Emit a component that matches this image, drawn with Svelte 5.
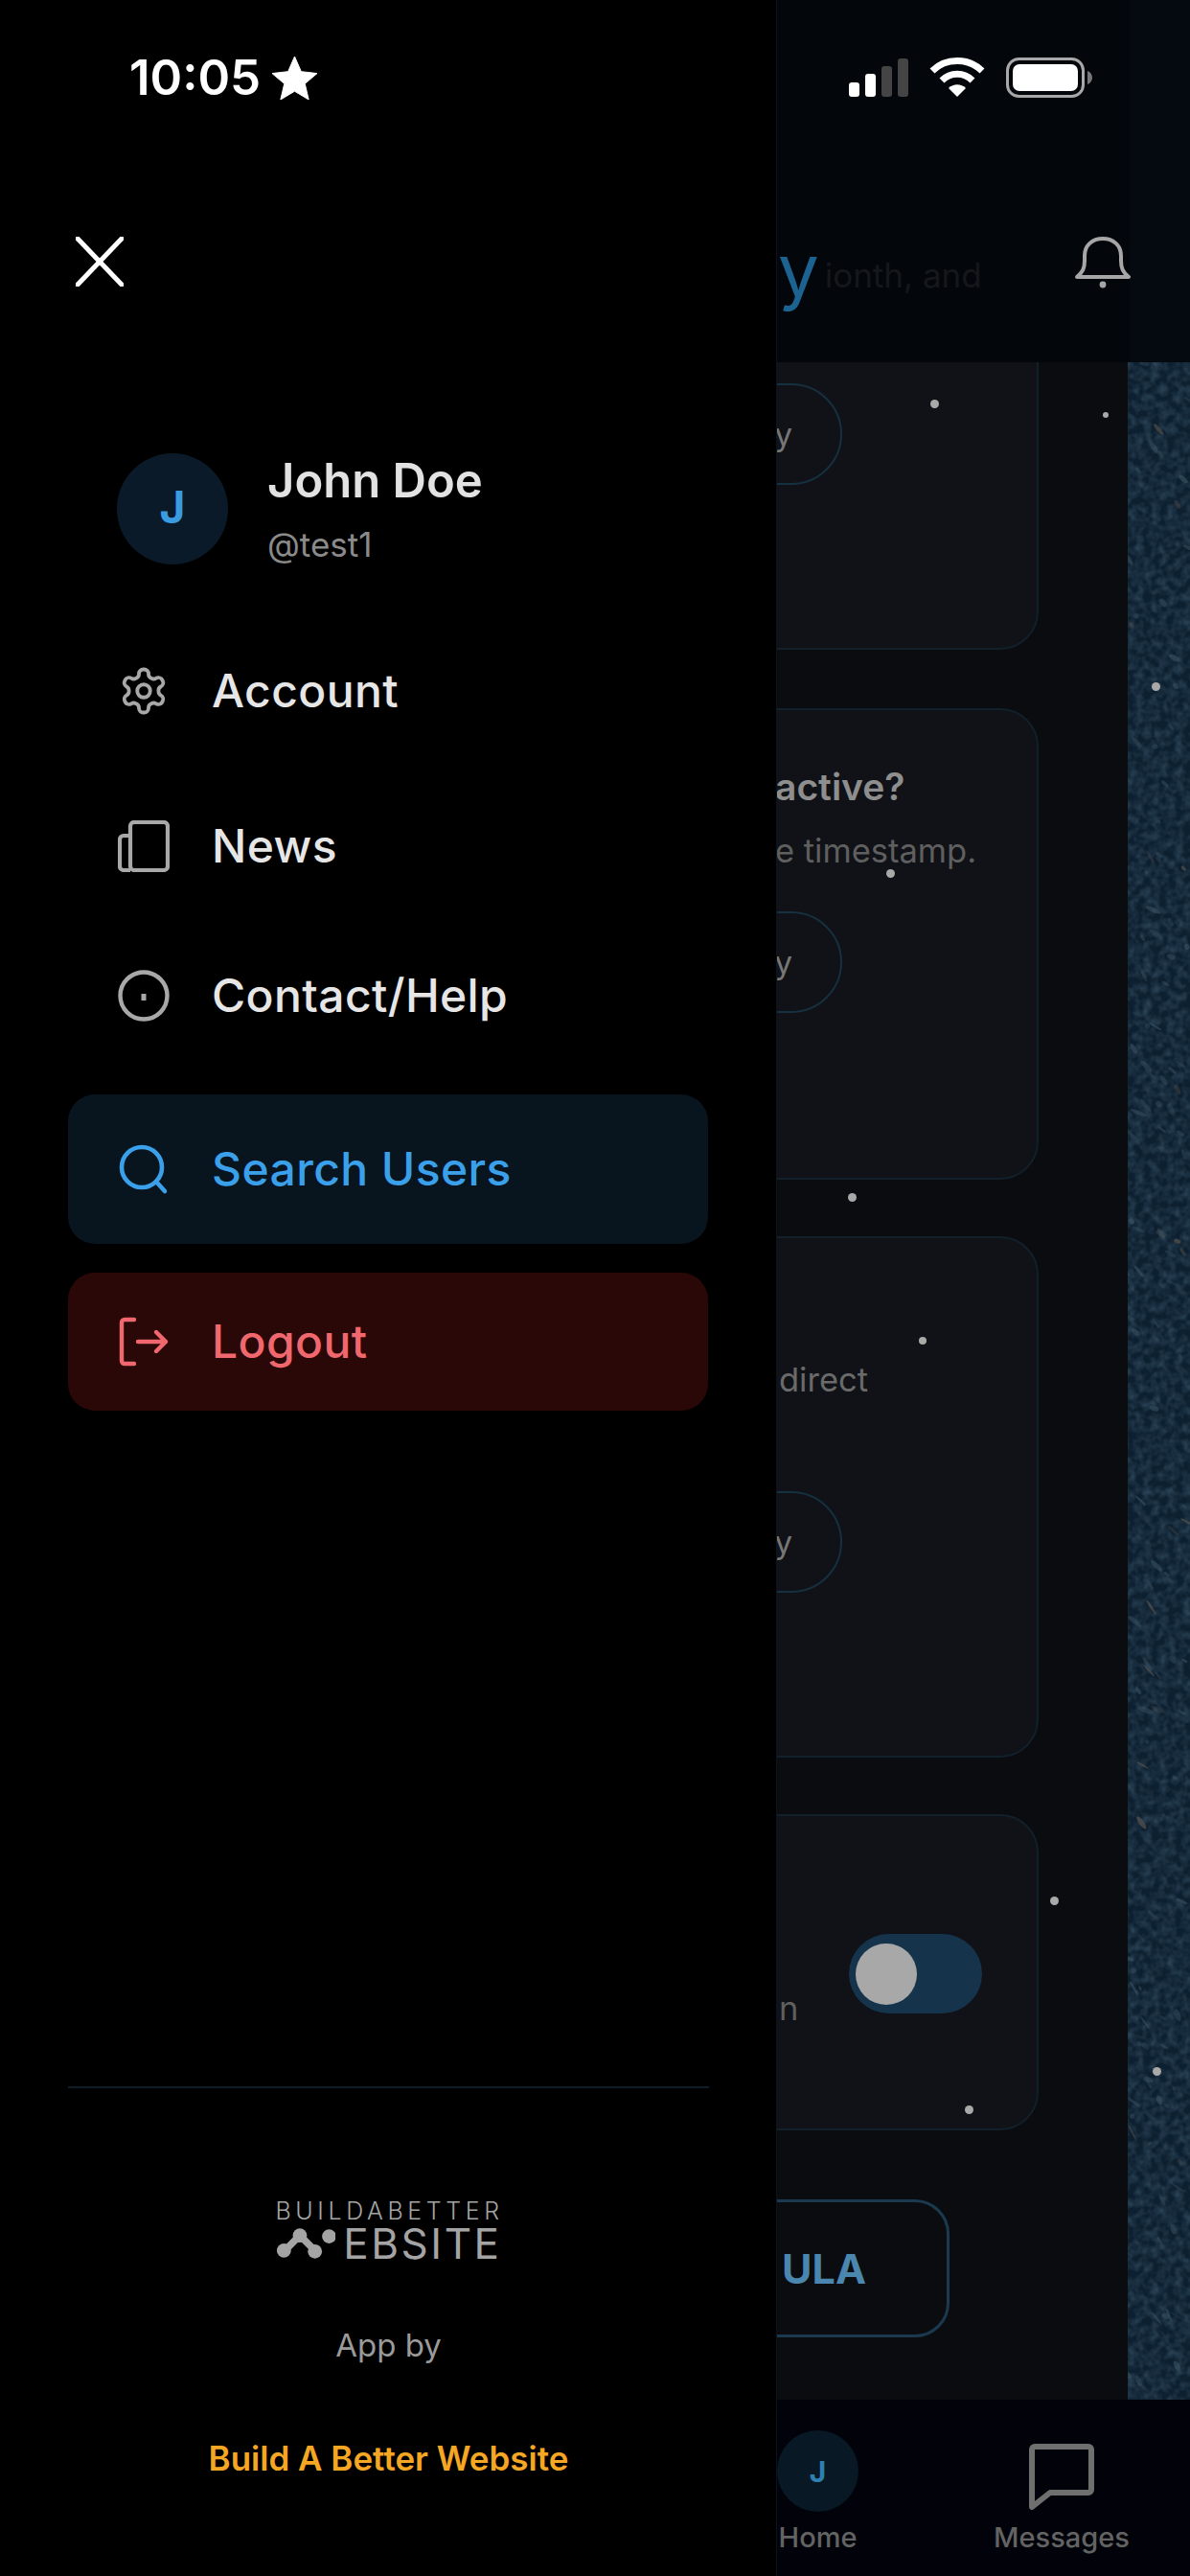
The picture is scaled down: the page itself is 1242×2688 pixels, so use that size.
<script>
  const menu = [
    { label: 'Account', icon: 'gear', cls: '' },
    { label: 'News', icon: 'news', cls: 'news' },
    { label: 'Contact/Help', icon: 'info', cls: 'contact' },
    { label: 'Search Users', icon: 'search', cls: 'search' },
    { label: 'Logout', icon: 'logout', cls: 'logout' }
  ];

  // little white dots that float over the page, coordinates are page pixels
  const stars = [
    [975, 421, 9], [1154, 433, 6], [1206, 716, 9], [929, 911, 9], [889, 1249, 9],
    [963, 1399, 8], [1100, 1983, 9], [1207, 2161, 9], [1011, 2201, 9]
  ];

  // seeded so the strip texture is the same on every render
  let seed = 11;
  function rnd() {
    seed = (seed * 16807) % 2147483647;
    return seed / 2147483647;
  }
  const specks = Array.from({ length: 150 }, () => ({
    x: rnd() * 65,
    y: rnd() * 2126,
    rx: 2 + rnd() * 7,
    ry: 1 + rnd() * 2,
    rot: 20 + rnd() * 50,
    color: rnd() > 0.86 ? '#6b5f55' : '#3d5566',
    op: 0.2 + rnd() * 0.4
  }));
</script>

<div class="screen">
  <aside class="drawer">
    <button class="close" aria-label="Close">
      <svg viewBox="0 0 50 52" width="50" height="52">
        <path d="M2 2 48 50M48 2 2 50" fill="none" stroke="#fff" stroke-width="5" stroke-linecap="round" />
      </svg>
    </button>

    <div class="profile">
      <div class="avatar">J</div>
      <div class="who">
        <div class="name">John Doe</div>
        <div class="handle">@test1</div>
      </div>
    </div>

    <nav class="menu">
      {#each menu as item}
        <div class="row {item.cls}">
          <span class="icon">
            {#if item.icon === 'gear'}
              <svg viewBox="0 0 24 24" width="54" height="54" fill="none" stroke="currentColor" stroke-width="1.7" stroke-linecap="round" stroke-linejoin="round">
                <path d="M12.22 2h-.44a2 2 0 0 0-2 2v.18a2 2 0 0 1-1 1.73l-.43.25a2 2 0 0 1-2 0l-.15-.08a2 2 0 0 0-2.73.73l-.22.38a2 2 0 0 0 .73 2.73l.15.1a2 2 0 0 1 1 1.72v.51a2 2 0 0 1-1 1.74l-.15.09a2 2 0 0 0-.73 2.73l.22.38a2 2 0 0 0 2.73.73l.15-.08a2 2 0 0 1 2 0l.43.25a2 2 0 0 1 1 1.73V20a2 2 0 0 0 2 2h.44a2 2 0 0 0 2-2v-.18a2 2 0 0 1 1-1.73l.43-.25a2 2 0 0 1 2 0l.15.08a2 2 0 0 0 2.73-.73l.22-.39a2 2 0 0 0-.73-2.73l-.15-.08a2 2 0 0 1-1-1.74v-.5a2 2 0 0 1 1-1.74l.15-.09a2 2 0 0 0 .73-2.73l-.22-.38a2 2 0 0 0-2.73-.73l-.15.08a2 2 0 0 1-2 0l-.43-.25a2 2 0 0 1-1-1.73V4a2 2 0 0 0-2-2z" />
                <circle cx="12" cy="12" r="3" />
              </svg>
            {:else if item.icon === 'news'}
              <svg viewBox="0 0 54 54" width="54" height="54" fill="none" stroke="currentColor" stroke-width="4.2" stroke-linejoin="round">
                <rect x="13" y="2" width="39" height="50" rx="4" />
                <path d="M13 16H6a4 4 0 0 0-4 4v28a4 4 0 0 0 4 4h7" />
              </svg>
            {:else if item.icon === 'info'}
              <svg viewBox="0 0 54 54" width="54" height="54" fill="none" stroke="currentColor" stroke-width="4.4">
                <circle cx="27" cy="27" r="24.5" />
                <rect x="24.5" y="25" width="5" height="7" fill="currentColor" stroke="none" />
              </svg>
            {:else if item.icon === 'search'}
              <svg viewBox="0 0 54 54" width="54" height="54" fill="none" stroke="currentColor" stroke-width="4.6" stroke-linecap="round">
                <circle cx="25" cy="25" r="21" />
                <path d="M40 40 49 50" />
              </svg>
            {:else}
              <svg viewBox="0 0 54 54" width="54" height="54" fill="none" stroke="currentColor" stroke-width="4.4" stroke-linecap="round" stroke-linejoin="round">
                <path d="M17 4H7a3 3 0 0 0-3 3v40a3 3 0 0 0 3 3h10" />
                <path d="M21 27H50M40 17 50 27 40 37" />
              </svg>
            {/if}
          </span>
          <span class="label">{item.label}</span>
        </div>
      {/each}
    </nav>

    <footer class="foot">
      <div class="logo">
        <div class="logo-top">BUILDABETTER</div>
        <div class="logo-bottom">
          <svg viewBox="0 0 68 36" width="68" height="36">
            <path d="M9 27 27 9 45 27" fill="none" stroke="#a4a4a4" stroke-width="8" stroke-linecap="round" stroke-linejoin="round" />
            <circle cx="9" cy="26" r="8" fill="#a4a4a4" />
            <circle cx="27" cy="9" r="8" fill="#a4a4a4" />
            <circle cx="44" cy="27" r="8" fill="#a4a4a4" />
            <circle cx="60" cy="10" r="8" fill="#a4a4a4" />
          </svg>
          <span>EBSITE</span>
        </div>
      </div>
      <div class="by">App by</div>
      <div class="credit">Build A Better Website</div>
    </footer>
  </aside>

  <section class="page">
    <header class="top">
      <span class="brand">y</span>
      <span class="tagline">ionth, and</span>
      <svg class="bell" viewBox="0 0 58 54" width="58" height="54" fill="none" stroke="#a6a6a6" stroke-width="4" stroke-linejoin="round">
        <path d="M2 42c6-5 8-9 8-17V20C10 9 18 2 29 2s19 7 19 18v5c0 8 2 12 8 17z" />
        <circle cx="29" cy="50" r="3.4" fill="#a6a6a6" stroke="none" />
      </svg>
    </header>

    <main class="body">
      <div class="cards">
        <div class="card first">
          <div class="pill"><span>y</span></div>
        </div>

        <div class="card second">
          <div class="title">active?</div>
          <div class="sub">e timestamp.</div>
          <div class="pill"><span>y</span></div>
        </div>

        <div class="card third">
          <div class="sub">direct</div>
          <div class="pill"><span>y</span></div>
        </div>

        <div class="card fourth">
          <div class="sub">n</div>
          <div class="toggle"><div class="knob"></div></div>
        </div>

        <div class="formula">ULA</div>
      </div>

      <svg class="strip" viewBox="0 0 65 2126" width="65" height="2126" preserveAspectRatio="none">
        <defs>
          <filter id="grain" x="0" y="0" width="100%" height="100%">
            <feTurbulence type="fractalNoise" baseFrequency="0.12" numOctaves="2" seed="4" />
            <feColorMatrix values="0 0 0 0 0.1  0 0 0 0 0.2  0 0 0 0 0.29  0.7 0 0 0 -0.24" />
          </filter>
        </defs>
        <rect width="65" height="2126" fill="#0d2030" />
        <rect width="65" height="2126" filter="url(#grain)" />
        {#each specks as s}
          <ellipse cx={s.x} cy={s.y} rx={s.rx} ry={s.ry} fill={s.color} opacity={s.op} transform="rotate({s.rot} {s.x} {s.y})" />
        {/each}
      </svg>
    </main>

    <div class="tabs">
      <div class="tab home">
        <div class="mini">J</div>
        <span>Home</span>
      </div>
      <div class="tab messages">
        <svg viewBox="0 0 68 70" width="68" height="70" fill="none" stroke="#6f6f6f" stroke-width="6" stroke-linejoin="round">
          <path d="M3 6a3 3 0 0 1 3-3h56a3 3 0 0 1 3 3v42a3 3 0 0 1-3 3H22L3 66z" />
        </svg>
        <span>Messages</span>
      </div>
    </div>
  </section>

  <div class="status">
    <div class="clock">
      <span>10:05</span>
      <svg viewBox="0 0 48 46" width="47" height="45"><path d="M24 0l7 16 17 2-13 11 4 17-15-9-15 9 4-17L0 18l17-2z" fill="#fff" stroke="#fff" stroke-width="1" stroke-linejoin="round" /></svg>
    </div>
    <div class="glyphs">
      <svg viewBox="0 0 62 40" width="62" height="40">
        <rect x="0" y="25" width="11" height="15" rx="3" fill="#fff" />
        <rect x="17" y="16" width="11" height="24" rx="3" fill="#fff" />
        <rect x="34" y="8" width="11" height="32" rx="3" fill="#444" />
        <rect x="51" y="0" width="11" height="40" rx="3" fill="#444" />
      </svg>
      <svg viewBox="0 0 58 42" width="58" height="42" fill="none" stroke="#fff" stroke-width="7">
        <path d="M3 14C17 0 41 0 55 14" />
        <path d="M13 24c9-9 23-9 32 0" />
        <path d="M29 41 20 32c5-5 13-5 18 0z" fill="#fff" stroke="none" />
      </svg>
      <svg viewBox="0 0 90 42" width="90" height="42">
        <rect x="1.5" y="1.5" width="79" height="39" rx="12" fill="none" stroke="#a8a8a8" stroke-width="3" />
        <rect x="7" y="7" width="68" height="28" rx="7" fill="#fff" />
        <path d="M85 14c3 1 5 4 5 7s-2 6-5 7z" fill="#777" />
      </svg>
    </div>
  </div>

  {#each stars as [x, y, size]}
    <i class="star" style="left:{x - size / 2}px;top:{y - size / 2}px;width:{size}px;height:{size}px"></i>
  {/each}
</div>

<style>
  :global(body) {
    margin: 0;
    background: #000;
  }

  .screen {
    position: relative;
    display: flex;
    width: 1242px;
    height: 2688px;
    overflow: hidden;
    font-family: Inter, "Liberation Sans", sans-serif;
    color: #e6e6e6;
  }

  /* drawer */
  .drawer {
    display: flex;
    flex-direction: column;
    flex: none;
    width: 811px;
    height: 2688px;
    box-sizing: border-box;
    padding-top: 247px;
    background: #000;
    border-right: 1px solid #0a141c;
  }

  .close {
    align-self: flex-start;
    margin-left: 79px;
    padding: 0;
    height: 52px;
    background: none;
    border: 0;
  }

  .close svg {
    display: block;
  }

  .profile {
    display: flex;
    align-items: center;
    gap: 41px;
    margin: 174px 0 0 122px;
  }

  .avatar {
    display: flex;
    align-items: center;
    justify-content: center;
    box-sizing: border-box;
    width: 116px;
    height: 116px;
    padding-bottom: 4px;
    border-radius: 50%;
    background: #0a1a28;
    color: #3b9be0;
    font-size: 46px;
    font-weight: 700;
  }

  .name {
    font-size: 49px;
    line-height: 58px;
    font-weight: 600;
    color: #e2e2e2;
  }

  .handle {
    margin-top: 16px;
    font-size: 35px;
    line-height: 42px;
    color: #8a8a8a;
  }

  .menu {
    display: flex;
    flex-direction: column;
    margin: 54px 71px 0;
  }

  .row {
    display: flex;
    align-items: center;
    gap: 44px;
    height: 156px;
    padding-left: 52px;
    border-radius: 28px;
    font-size: 48px;
    letter-spacing: 0.4px;
    font-weight: 500;
    color: #e6e6e6;
  }

  .label {
    margin-top: -2px;
  }

  .icon {
    display: flex;
    color: #a8a8a8;
  }

  .news {
    margin-top: 6px;
  }

  .search {
    margin-top: 25px;
    background: #08141e;
    color: #3ba0ea;
  }

  .logout {
    height: 144px;
    margin-top: 30px;
    background: #2a0808;
    color: #f0686e;
  }

  .search .icon,
  .logout .icon {
    color: inherit;
  }

  .foot {
    display: flex;
    flex-direction: column;
    align-items: center;
    margin: auto 70px 0 71px;
    height: 511px;
    box-sizing: border-box;
    padding-top: 116px;
    border-top: 2px solid #0e1d28;
  }

  .logo {
    display: flex;
    flex-direction: column;
    width: 236px;
    color: #a4a4a4;
  }

  .logo-top {
    font-size: 25px;
    line-height: 24px;
    font-weight: 300;
    letter-spacing: 4.6px;
    white-space: nowrap;
  }

  .logo-bottom {
    display: flex;
    align-items: center;
    height: 36px;
    margin-top: 4px;
  }

  .logo-bottom span {
    margin-left: 8px;
    font-size: 44px;
    line-height: 36px;
    font-weight: 400;
    letter-spacing: 2.5px;
  }

  .by {
    margin-top: 68px;
    font-size: 33px;
    line-height: 40px;
    color: #9a9a9a;
  }

  .credit {
    margin-top: 76px;
    font-size: 35px;
    line-height: 44px;
    font-weight: 600;
    color: #f5a623;
  }

  /* dimmed page behind the drawer */
  .page {
    display: flex;
    flex-direction: column;
    flex: 1;
    min-width: 0;
    background: #0b0c10;
  }

  .top {
    position: relative;
    display: flex;
    flex: none;
    align-items: flex-start;
    height: 378px;
    background: linear-gradient(90deg, #03070c 0 368px, #050a11 368px);
    overflow: hidden;
  }

  .brand {
    margin: 243px 0 0 1px;
    font-size: 76px;
    line-height: 76px;
    color: #1c6391;
  }

  .tagline {
    margin: 266px 0 0 6px;
    font-size: 35px;
    line-height: 42px;
    color: #15171b;
  }

  .bell {
    position: absolute;
    left: 311px;
    top: 247px;
  }

  .body {
    display: flex;
    flex: 1;
    min-height: 0;
    overflow: hidden;
  }

  .cards {
    display: flex;
    flex: none;
    flex-direction: column;
    align-items: flex-start;
    width: 366px;
    margin-top: -120px;
  }

  .card {
    flex: none;
    box-sizing: border-box;
    width: 473px;
    margin-left: -200px;
    padding-left: 196px;
    background: #101217;
    border: 2px solid #12202b;
    border-radius: 40px;
  }

  .first {
    height: 420px;
    padding-top: 140px;
  }

  .second {
    height: 492px;
    margin-top: 61px;
    padding-top: 57px;
  }

  .third {
    height: 544px;
    margin-top: 59px;
    padding-top: 128px;
  }

  .fourth {
    display: flex;
    height: 330px;
    margin-top: 59px;
    padding: 123px 0 0 200px;
  }

  .title {
    font-size: 39px;
    line-height: 46px;
    font-weight: 600;
    color: #8e8e8e;
  }

  .sub {
    margin-top: 24px;
    font-size: 34.5px;
    line-height: 40px;
    color: #5f5f5f;
    white-space: nowrap;
  }

  .third .sub {
    margin: 0;
    padding-left: 4px;
    color: #6a6a6a;
  }

  .pill {
    display: flex;
    align-items: center;
    justify-content: flex-end;
    box-sizing: border-box;
    width: 266px;
    height: 106px;
    margin: 0 0 0 -196px;
    padding-right: 50px;
    border: 2px solid #16303f;
    border-radius: 53px;
    font-size: 33px;
    color: #777;
  }

  .second .pill {
    margin-top: 43px;
  }

  .third .pill {
    margin-top: 96px;
  }

  .fourth .sub {
    width: 73px;
    margin: 58px 0 0;
    padding-left: 0;
    box-sizing: border-box;
    color: #5f5f5f;
  }

  .toggle {
    display: flex;
    align-items: center;
    box-sizing: border-box;
    width: 139px;
    height: 83px;
    padding-left: 7px;
    border-radius: 42px;
    background: #15334b;
  }

  .knob {
    width: 64px;
    height: 64px;
    border-radius: 50%;
    background: #a8a8a8;
  }

  .formula {
    display: flex;
    align-items: center;
    justify-content: flex-end;
    box-sizing: border-box;
    width: 380px;
    height: 144px;
    margin: 72px 0 0 -200px;
    padding-right: 84px;
    border: 3px solid #1b3a4f;
    border-radius: 36px;
    font-size: 43px;
    font-weight: 700;
    color: #4a86ad;
  }

  .strip {
    display: block;
    flex: none;
    width: 65px;
    height: 2126px;
  }

  .tabs {
    position: relative;
    flex: none;
    height: 184px;
    background: #02030a;
    overflow: hidden;
  }

  .tab {
    position: absolute;
    top: 32px;
    display: flex;
    flex-direction: column;
    align-items: center;
    height: 152px;
    font-size: 29px;
    font-weight: 500;
    color: #636363;
  }

  .tab span {
    position: absolute;
    top: 92px;
    line-height: 40px;
  }

  .home {
    left: 0;
    width: 85px;
  }

  .messages {
    left: 224px;
    width: 146px;
    padding-top: 14px;
  }

  .messages svg {
    display: block;
  }

  .mini {
    display: flex;
    align-items: center;
    justify-content: center;
    flex: none;
    width: 85px;
    height: 85px;
    border-radius: 50%;
    background: #081824;
    color: #2f7fb0;
    font-size: 30px;
    font-weight: 700;
  }

  /* status bar lies over both the drawer and the page */
  .status {
    position: absolute;
    left: 0;
    right: 0;
    top: 59px;
    display: flex;
    align-items: center;
    justify-content: space-between;
    height: 44px;
    padding: 0 102px 0 135px;
  }

  .clock {
    display: flex;
    align-items: center;
    gap: 12px;
    font-size: 51px;
    line-height: 46px;
    font-weight: 600;
    color: #fff;
  }

  .glyphs {
    display: flex;
    align-items: center;
    gap: 22px;
  }

  .glyphs svg {
    display: block;
  }

  .star {
    position: absolute;
    border-radius: 50%;
    background: #a9a9a9;
  }
</style>
